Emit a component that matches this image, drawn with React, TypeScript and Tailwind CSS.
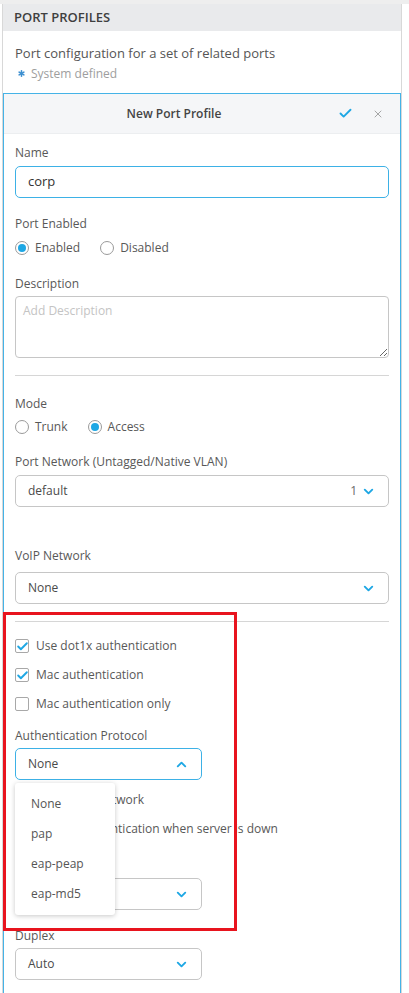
import React from 'react'
import { Check, X, ChevronDown, ChevronUp, Asterisk } from 'lucide-react'

const blue = '#1ea7e4'

function Label({ children, className = '' }: { children: React.ReactNode; className?: string }) {
  return <div className={`text-[12px] leading-[18px] text-[#585858] ${className}`}>{children}</div>
}

function Radio({ label, checked }: { label: string; checked?: boolean }) {
  return (
    <div className="flex items-center gap-[6px] h-[20px]">
      <span className="w-[14px] h-[14px] rounded-full border border-[#9a9a9a] flex items-center justify-center bg-white">
        {checked && <span className="w-[8px] h-[8px] rounded-full bg-[#1ea7e4]" />}
      </span>
      <span className="text-[12px] text-[#585858]">{label}</span>
    </div>
  )
}

function CheckRow({ label, checked, className = '' }: { label: string; checked?: boolean; className?: string }) {
  return (
    <div className={`flex items-center gap-[7px] h-[20px] ${className}`}>
      <span className="relative w-[14px] h-[14px] rounded-[2px] border border-[#a8a8a8] bg-white shrink-0">
        {checked && (
          <Check size={13} strokeWidth={3.5} color={blue} className="absolute left-[0px] top-[0px]" />
        )}
      </span>
      <span className="text-[12px] text-[#585858] whitespace-nowrap">{label}</span>
    </div>
  )
}

function Select({
  value,
  extra,
  open,
  narrow,
  className = '',
}: {
  value: string
  extra?: string
  open?: boolean
  narrow?: boolean
  className?: string
}) {
  return (
    <div
      className={`h-[32px] rounded-[5px] border ${open ? 'border-[#3db1e6]' : 'border-[#c6c6c6]'} flex items-center pl-[12px] pr-[12px] ${narrow ? 'w-[187px]' : 'w-full'} ${className}`}
    >
      <span className="flex-1 text-[12px] text-[#4a4a4a]">{value}</span>
      {extra && <span className="text-[12px] text-[#6a6a6a] mr-[4px]">{extra}</span>}
      {open ? (
        <ChevronUp size={15} strokeWidth={3} color={blue} />
      ) : (
        <ChevronDown size={15} strokeWidth={3} color={blue} />
      )}
    </div>
  )
}

export default function App() {
  return (
    <div className="relative w-[409px] h-[993px] overflow-hidden bg-white" style={{ fontFamily: '"Open Sans", "Noto Sans", sans-serif' }}>
      <div className="h-[4px] bg-[#eeeeee]" />
      <div className="ml-[2px] w-[400px] border-x border-[#d8d8d8] h-[1020px]">
        <div className="h-[27px] bg-[#e9eaec] flex items-center pl-[11px]">
          <span className="text-[13px] font-semibold text-[#3f3f3f]">PORT PROFILES</span>
        </div>

        <div className="pl-[12px] pt-[12px] pb-[9px]">
          <div className="text-[13px] leading-[20px] text-[#555]">Port configuration for a set of related ports</div>
          <div className="flex items-center gap-[4px] h-[21px]">
            <Asterisk size={11} strokeWidth={3.5} color="#3d8fd0" className="ml-[1px]" />
            <span className="text-[12px] text-[#9e9e9e]">System defined</span>
          </div>
        </div>

        <div className="border border-[#45b3e7] h-[930px]">
          <div className="h-[40px] bg-[#f5f6f8] border-b border-[#eceef0] flex items-center">
            <div className="flex-1 text-center text-[12px] font-semibold text-[#444] pl-[4px] pt-[1px]">New Port Profile</div>
            <div className="w-[60px] flex items-center">
              <Check size={15} strokeWidth={3} color={blue} className="ml-[-2px]" />
              <X size={12} strokeWidth={1.5} color="#8a8a8a" className="ml-[19px]" />
            </div>
          </div>

          <div className="px-[11px] flex flex-col">
            <Label className="mt-[10px]">Name</Label>
            <div className="mt-[4px] h-[32px] rounded-[5px] border border-[#3db1e6] flex items-center pl-[12px] text-[13px] text-[#333]">
              corp
            </div>

            <Label className="mt-[17px]">Port Enabled</Label>
            <div className="mt-[5px] flex gap-[20px]">
              <Radio label="Enabled" checked />
              <Radio label="Disabled" />
            </div>

            <Label className="mt-[17px]">Description</Label>
            <textarea
              placeholder="Add Description"
              className="mt-[3px] h-[62px] w-full rounded-[4px] border border-[#c6c6c6] px-[7px] py-[5px] text-[12px] text-[#333] placeholder:text-[#c4c4c4] outline-none resize-y"
            />

            <div className="mt-[17px] h-px bg-[#d6d6d6]" />

            <Label className="mt-[19px]">Mode</Label>
            <div className="mt-[4px] flex gap-[20px]">
              <Radio label="Trunk" />
              <Radio label="Access" checked />
            </div>

            <Label className="mt-[16px]">Port Network (Untagged/Native VLAN)</Label>
            <Select value="default" extra="1" className="mt-[4px] h-[31px]" />

            <Label className="mt-[40px]">VoIP Network</Label>
            <Select value="None" className="mt-[7px]" />

            <div className="mt-[17px] h-px bg-[#d6d6d6]" />

            <CheckRow label="Use dot1x authentication" checked className="mt-[14px]" />
            <CheckRow label="Mac authentication" checked className="mt-[9px]" />
            <CheckRow label="Mac authentication only" className="mt-[9px]" />

            <Label className="mt-[13px]">Authentication Protocol</Label>
            <div className="relative mt-[3px]">
              <Select value="None" open narrow />
              <div className="absolute z-10 left-0 top-[35px] w-[100px] py-[6px] bg-white rounded-[3px] shadow-[0_1px_5px_rgba(0,0,0,0.22)]">
                {['None', 'pap', 'eap-peap', 'eap-md5'].map((o) => (
                  <div key={o} className="h-[30px] flex items-center pl-[16px] text-[12px] text-[#555]">
                    {o}
                  </div>
                ))}
              </div>
            </div>

            <CheckRow label="Use Guest Network" className="mt-[10px]" />
            <CheckRow label="Bypass authentication when server is down" className="mt-[9px]" />

            <Label className="mt-[10px]">Speed</Label>
            <Select value="Auto" narrow className="mt-[11px]" />

            <Label className="mt-[17px]">Duplex</Label>
            <Select value="Auto" narrow className="mt-[3px]" />
          </div>
        </div>
      </div>

      <div className="absolute left-[3px] top-[612px] w-[234px] h-[319px] border-[3px] border-[#e8141e] z-20 pointer-events-none" />
    </div>
  )
}
